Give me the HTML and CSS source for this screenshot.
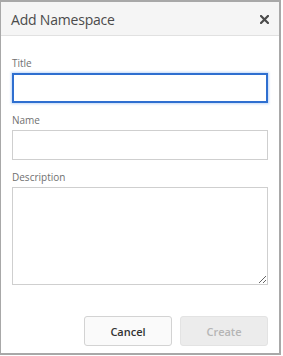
FILE: index.html
```html
<!DOCTYPE html>
<html lang="en">
<head>
  <meta charset="utf-8">
  <title>Add Namespace</title>
  <link rel="stylesheet" href="styles.css">
</head>
<body>
  <div class="dialog">
    <!-- header -->
    <div class="dialog-header">
      <h1 class="dialog-title">Add Namespace</h1>
      <button class="close-btn" aria-label="Close">
        <svg width="9" height="9" viewBox="0 0 9 9"><path d="M1 1L8 8M8 1L1 8" stroke="#4b4b4b" stroke-width="2.2" stroke-linecap="square"/></svg>
      </button>
    </div>

    <!-- form -->
    <div class="dialog-body">
      <label class="field-label" for="nsTitle">Title</label>
      <input id="nsTitle" class="field-input focused" type="text">

      <label class="field-label" for="nsName">Name</label>
      <input id="nsName" class="field-input" type="text">

      <label class="field-label" for="nsDesc">Description</label>
      <textarea id="nsDesc" class="field-input field-area"></textarea>
    </div>

    <!-- buttons -->
    <div class="dialog-footer">
      <button class="btn btn-cancel">Cancel</button>
      <button class="btn btn-create" disabled>Create</button>
    </div>
  </div>
</body>
</html>
```

FILE: styles.css
```css
* { margin: 0; padding: 0; box-sizing: border-box; }
body {
  font-family: "Open Sans", "Liberation Sans", sans-serif;
  background: #fff;
  color: #4b4b4b;
}
/* dialog frame */
.dialog {
  width: 281px;
  height: 355px;
  border: 2px solid #a8a8a8;
  border-left-width: 1px;
  background: #fff;
  display: flex;
  flex-direction: column;
}
.dialog-header {
  height: 34px;
  background: #f5f5f5;
  border-bottom: 1px solid #e1e1e1;
  display: flex;
  align-items: center;
  justify-content: space-between;
  padding: 0 10px 0 10px;
}
.dialog-title {
  font-size: 14px;
  font-weight: 400;
  color: #4b4b4b;
  letter-spacing: -0.2px;
  margin-top: 1px;
}
.close-btn {
  border: none;
  background: none;
  width: 9px;
  height: 9px;
  display: flex;
  margin-top: 1px;
}
/* form */
.dialog-body {
  padding: 21px 11px 0 11px;
}
.field-label {
  display: block;
  font-size: 10px;
  line-height: 12px;
  color: #707070;
  margin-bottom: 4px;
}
.field-input {
  display: block;
  width: 256px;
  height: 30px;
  border: 1px solid #cfcfcf;
  border-radius: 0;
  background: #fff;
  font-family: inherit;
  margin-bottom: 11px;
  outline: none;
}
.field-input.focused {
  border: 2px solid #2f6fd0;
  box-shadow: 0 0 2px 1px rgba(120, 170, 240, 0.45);
}
.field-area {
  height: 98px;
  resize: vertical;
}
/* footer */
.dialog-footer {
  display: flex;
  justify-content: flex-end;
  gap: 8px;
  padding: 20px 11px 0 11px;
}
.btn {
  width: 88px;
  height: 30px;
  border-radius: 3px;
  font-family: inherit;
  font-size: 11px;
  font-weight: 600;
}
.btn-cancel {
  background: #fafafa;
  border: 1px solid #d3d3d3;
  color: #333;
}
.btn-create {
  background: #ececec;
  border: 1px solid #e3e3e3;
  color: #b5b5b5;
}
```
